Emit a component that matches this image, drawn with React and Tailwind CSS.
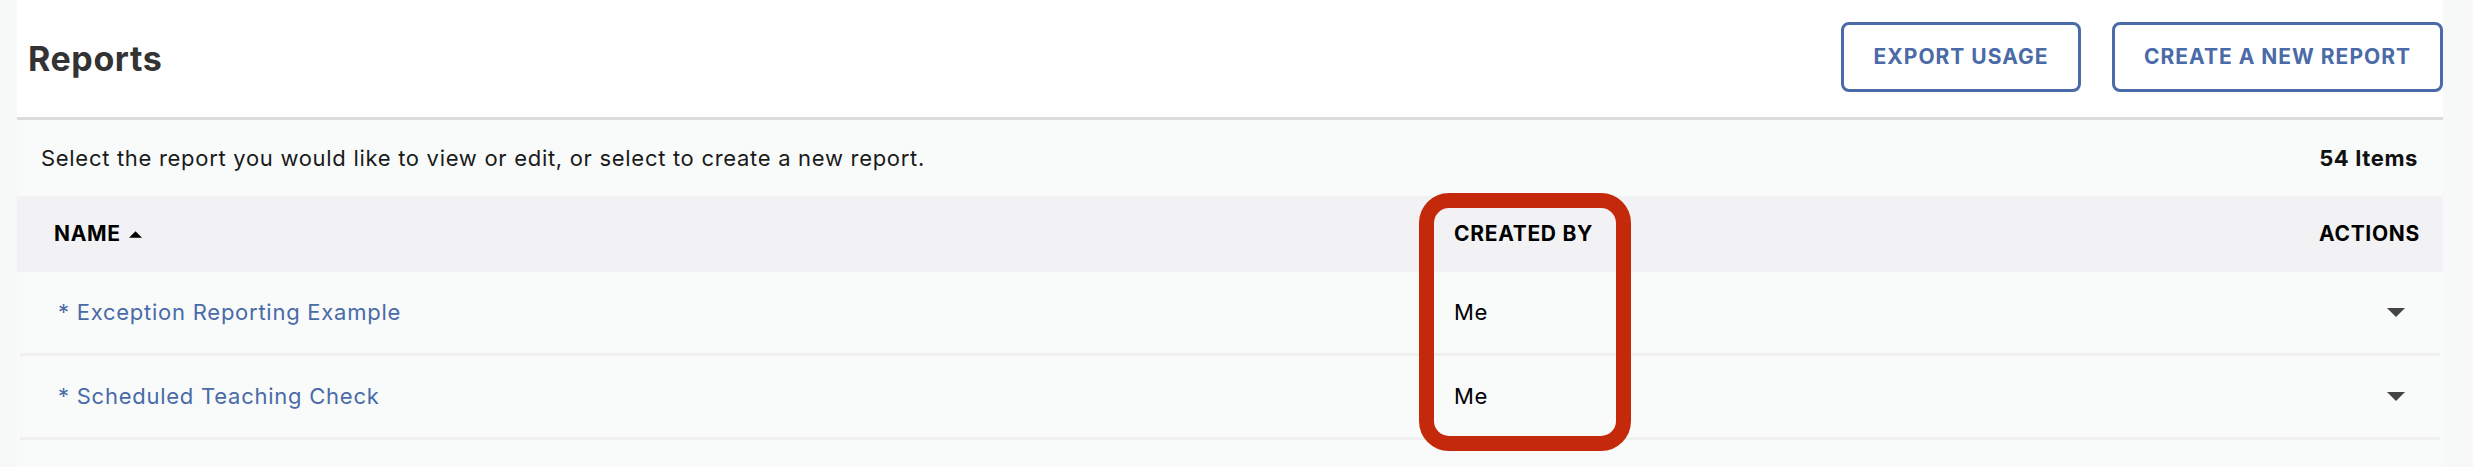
import React from 'react';

const rows = [
  { name: '* Exception Reporting Example', createdBy: 'Me' },
  { name: '* Scheduled Teaching Check', createdBy: 'Me' },
];

function Caret({ up = false, className = '' }) {
  return (
    <svg viewBox="0 0 18 9" className={className}>
      {up ? <polygon points="0,9 9,0 18,9" fill="currentColor" /> : <polygon points="0,0 18,0 9,9" fill="currentColor" />}
    </svg>
  );
}

export default function App() {
  return (
    <div
      className="w-full h-[467px] bg-[#f7f8f8] pl-[17px] pr-[30px] overflow-hidden"
      style={{ fontFamily: 'Inter, "Noto Sans", sans-serif' }}
    >
      <div className="relative h-full bg-[#f9fafa]">
        {/* Header */}
        <div className="h-[120px] bg-white border-b-[3px] border-[#dcdcdc] flex items-center justify-between pl-[11px]">
          <h1 className="text-[34px] font-bold text-[#333333] tracking-[0.6px]">Reports</h1>
          <div className="flex items-center gap-[31px] pb-[3px]">
            <button className="w-[240px] h-[70px] rounded-[8px] border-[3px] border-[#4a6aa8] bg-white text-[#4a6aa8] text-[21px] font-bold tracking-[1px]">
              EXPORT USAGE
            </button>
            <button className="w-[331px] h-[70px] rounded-[8px] border-[3px] border-[#4a6aa8] bg-white text-[#4a6aa8] text-[21px] font-bold tracking-[1px]">
              CREATE A NEW REPORT
            </button>
          </div>
        </div>

        {/* Description */}
        <div className="h-[76px] flex items-center justify-between pl-[24px] pr-[25px]">
          <p className="text-[22px] text-[#1a1a1a] tracking-[0.7px]">
            Select the report you would like to view or edit, or select to create a new report.
          </p>
          <span className="text-[22px] font-bold text-[#111] tracking-[0.6px]">54 Items</span>
        </div>

        {/* Table header */}
        <div className="h-[76px] bg-[#f2f2f4] rounded-tr-[4px] flex items-center text-[21px] font-bold text-black tracking-[0.7px]">
          <div className="w-[1437px] pl-[37px] flex items-center gap-[8px]">
            NAME
            <Caret up className="w-[13px] h-[7px] text-black" />
          </div>
          <div className="w-[500px]">CREATED BY</div>
          <div className="flex-1 text-right pr-[23px]">ACTIONS</div>
        </div>

        {/* Rows */}
        <div className="px-[3px]">
          {rows.map((r) => (
            <div key={r.name} className="h-[84px] border-b-[3px] border-[#f0f0f1] flex items-center text-[22px] tracking-[0.75px]">
              <div className="w-[1434px] pl-[38px] text-[#4a6aa8]">{r.name}</div>
              <div className="w-[500px] text-black">{r.createdBy}</div>
              <div className="flex-1 flex justify-end pr-[35px]">
                <Caret className="w-[18px] h-[9px] text-[#444444]" />
              </div>
            </div>
          ))}
        </div>

        {/* Highlight annotation */}
        <div className="absolute left-[1402px] top-[193px] w-[212px] h-[258px] border-[15px] border-[#c3290a] rounded-[30px]" />
      </div>
    </div>
  );
}
